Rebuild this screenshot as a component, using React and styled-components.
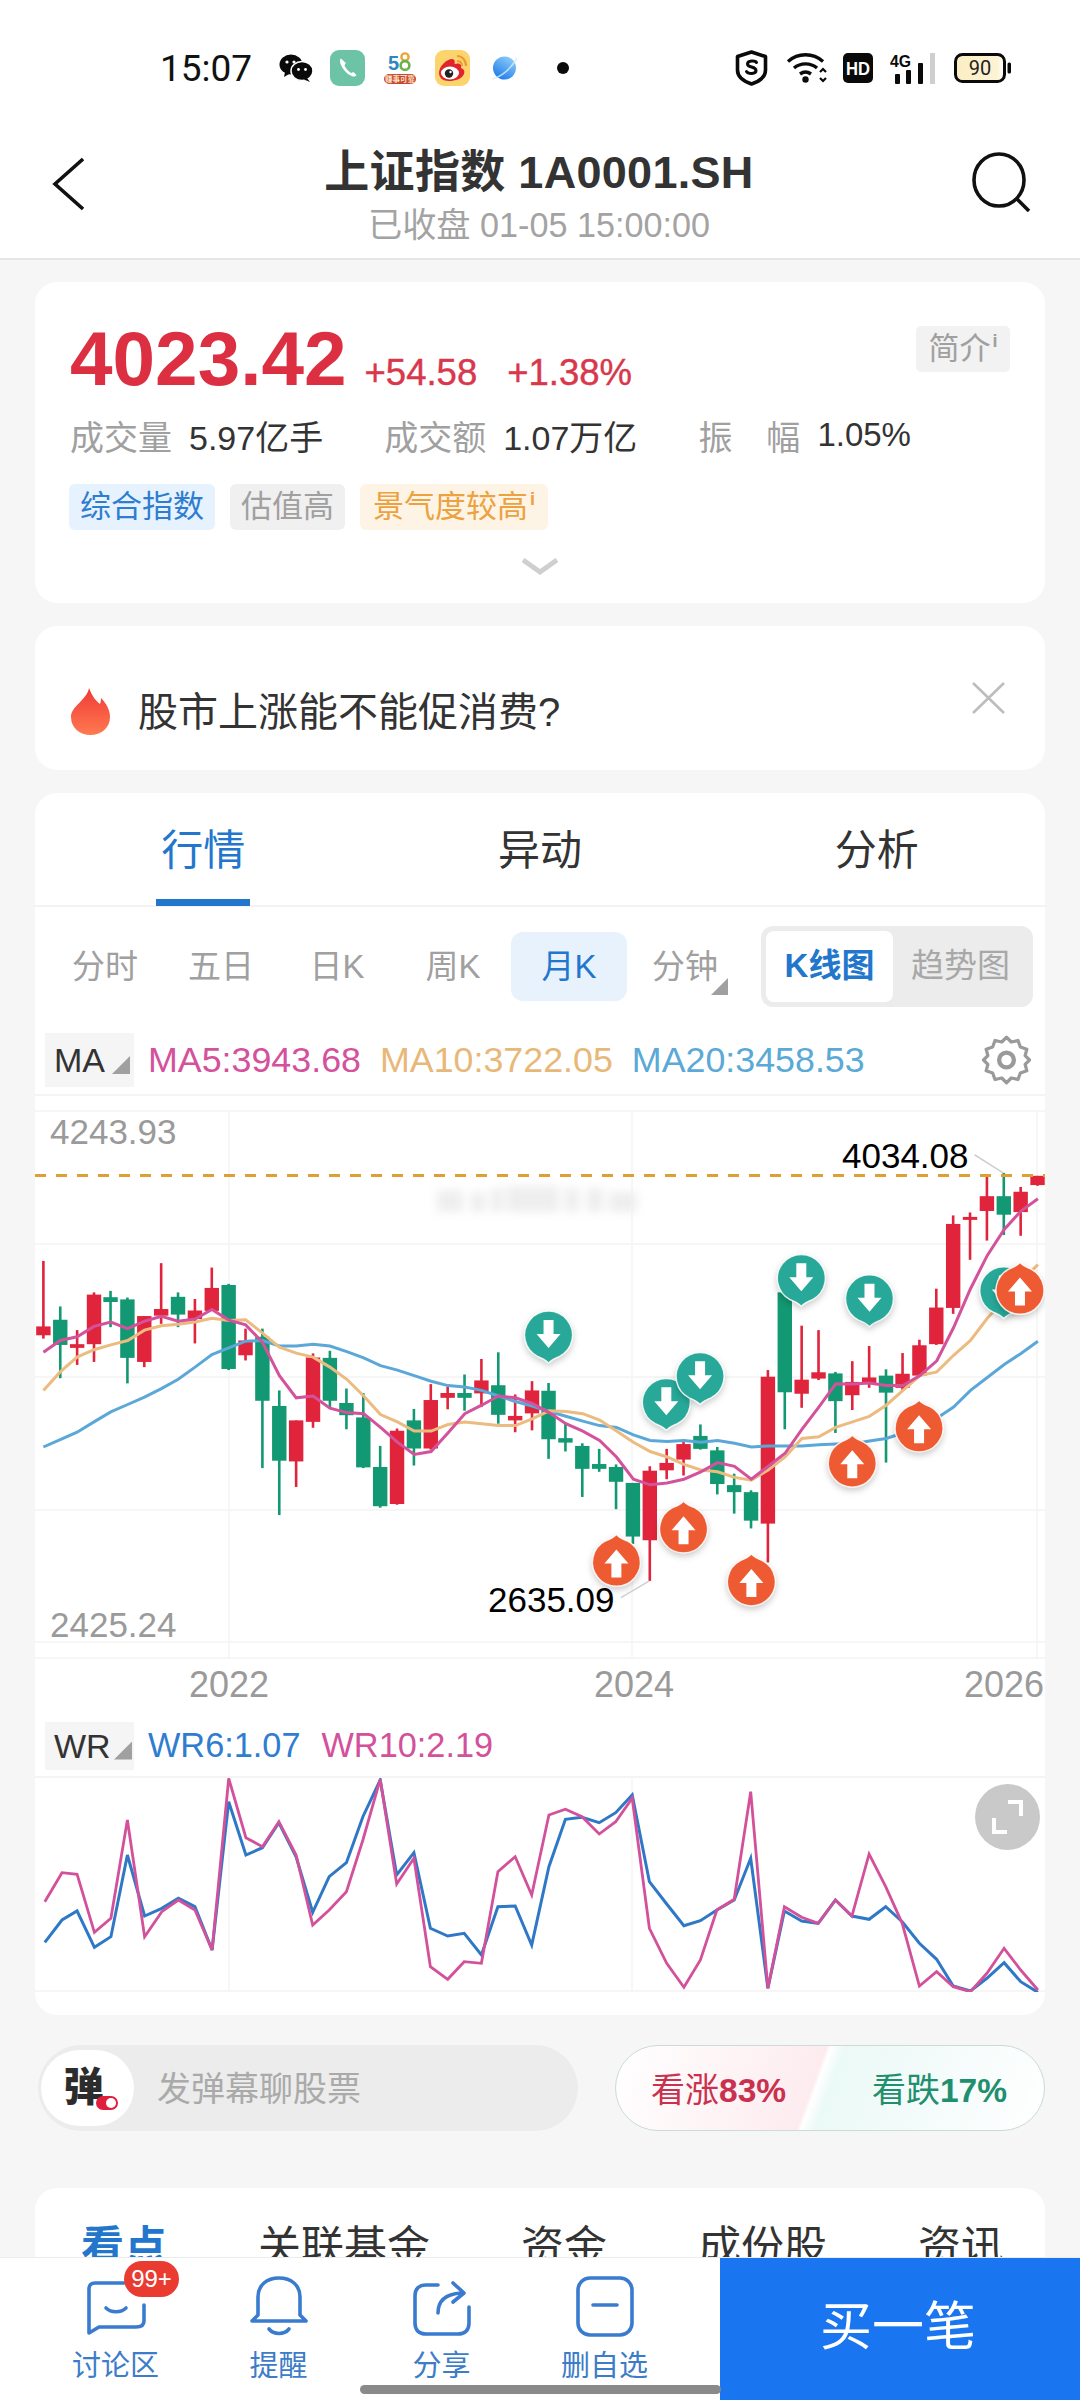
import styled, { createGlobalStyle } from "styled-components";

const GlobalStyle = createGlobalStyle`
  html, body {
    margin: 0;
    padding: 0;
    background: #f6f6f6;
  }
  * {
    box-sizing: border-box;
  }
`;

const Page = styled.div`
  position: relative;
  width: 1080px;
  height: 2400px;
  overflow: hidden;
  background: #f6f6f6;
  font-family: "Liberation Sans", "Noto Sans CJK SC", sans-serif;
  color: #333;
`;

const Top = styled.header`
  background: #fff;
  border-bottom: 2px solid #e6e6e6;
`;

const StatusBar = styled.div`
  display: flex;
  align-items: center;
  height: 136px;
  padding: 0 69px 0 160px;
  color: #111;
`;

const Time = styled.span`
  font-family: Roboto, sans-serif;
  font-size: 37px;
  margin-right: 30px;
  width: 89px;
  white-space: nowrap;
`;

const StatusIcon = styled.svg`
  display: block;
  flex: none;
  margin-left: ${(p) => p.$ml || 0}px;
  overflow: visible;
`;

const StatusSpacer = styled.div`
  flex: 1;
`;

const NavBar = styled.div`
  display: flex;
  align-items: flex-start;
  justify-content: space-between;
  height: 122px;
  padding: 16px 49px 0 52px;
`;

const BackIcon = styled.svg`
  margin-top: 5px;
`;

const NavTitle = styled.div`
  flex: 1;
  text-align: center;
  margin-top: -5px;
  padding-left: 22px;
`;

const Title = styled.div`
  font-size: 45px;
  line-height: 52px;
  font-weight: 700;
  color: #333;
  letter-spacing: 0.3px;
`;

const SubTitle = styled.div`
  font-size: 34.2px;
  line-height: 40px;
  margin-top: 6px;
  color: #a3a3a3;
`;

const Main = styled.main`
  padding: 22px 35px 0;
`;

const Card = styled.section`
  position: relative;
  background: #fff;
  border-radius: 22px;
  margin-bottom: ${(p) => p.$mb || 0}px;
`;

const QuoteCard = styled(Card)`
  height: 321px;
  padding: 39px 35px 0 35px;
`;

const PriceRow = styled.div`
  display: flex;
  align-items: baseline;
`;

const Price = styled.div`
  font-size: 76.5px;
  line-height: 76px;
  font-weight: 700;
  color: #dc2f42;
`;

const Change = styled.div`
  font-size: 36.5px;
  font-weight: 500;
  color: #d8374c;
  margin-left: ${(p) => p.$ml}px;
  -webkit-text-stroke: 0.4px #d8374c;
`;

const IntroChip = styled.div`
  position: absolute;
  top: 44px;
  right: 35px;
  width: 94px;
  height: 46px;
  border-radius: 5px;
  background: #f2f2f2;
  color: #a0a0a0;
  font-size: 31px;
  line-height: 46px;
  text-align: center;
  white-space: nowrap;
`;

const Sup = styled.sup`
  font-size: 18px;
  font-weight: 700;
  line-height: 0;
  vertical-align: 12px;
  margin-left: 2px;
`;

const StatRow = styled.div`
  display: flex;
  align-items: center;
  margin-top: 18px;
  height: 40px;
  font-size: 34px;
  white-space: nowrap;
`;

const StatLabel = styled.span`
  width: 102px;
  color: #a0a0a0;
  text-align-last: justify;
`;

const StatValue = styled.span`
  margin-left: 17px;
  margin-right: 61px;
  color: #333;
  font-size: ${(p) => p.$size || 34}px;
`;

const TagRow = styled.div`
  display: flex;
  margin-top: 29px;
  gap: 15px;
  margin-left: -1px;
`;

const toneColors = {
  blue: ["#e6f2fd", "#2f7dd0"],
  grey: ["#f0f0f0", "#a0a0a0"],
  orange: ["#fef4e6", "#eca23f"],
};

const Tag = styled.span`
  height: 46px;
  padding: 0 ${(p) => (p.$tone === "orange" ? 13 : 11)}px;
  border-radius: 6px;
  background: ${(p) => toneColors[p.$tone][0]};
  color: ${(p) => toneColors[p.$tone][1]};
  font-size: 31px;
  line-height: 45px;
  white-space: nowrap;
`;

const MoreChevron = styled.svg`
  position: absolute;
  left: 487px;
  bottom: 27px;
`;

const TopicCard = styled(Card)`
  display: flex;
  align-items: center;
  height: 144px;
  padding: 27px 40px 0 36px;
`;

const TopicText = styled.div`
  margin-left: 28px;
  font-size: 40px;
  line-height: 48px;
  color: #333;
`;

const TopicClose = styled.svg`
  margin-left: auto;
  margin-top: -27px;
`;

const ChartCard = styled(Card)`
  height: 1222px;
  overflow: hidden;
`;

const MainTabs = styled.div`
  display: grid;
  grid-template-columns: repeat(3, 1fr);
  height: 114px;
  border-bottom: 2px solid #f3f3f3;
`;

const MainTab = styled.div`
  position: relative;
  text-align: center;
  padding-top: 33px;
  font-size: 42px;
  line-height: 50px;
  color: ${(p) => (p.$active ? "#2277cc" : "#333")};

  ${(p) =>
    p.$active &&
    `&::after {
      content: "";
      position: absolute;
      left: 121px;
      bottom: -1px;
      width: 94px;
      height: 7px;
      background: #2277cc;
    }`}
`;

const PeriodRow = styled.div`
  display: flex;
  align-items: flex-start;
  padding: 19px 12px 0 12px;
`;

const Period = styled.div`
  position: relative;
  width: 116px;
  height: 69px;
  margin-top: 6px;
  border-radius: 12px;
  text-align: center;
  font-size: 33px;
  line-height: 69px;
  background: ${(p) => (p.$active ? "#e8f2fd" : "transparent")};
  color: ${(p) => (p.$active ? "#2277cc" : "#a0a0a0")};
`;

const Corner = styled.i`
  position: absolute;
  right: ${(p) => p.$right}px;
  bottom: ${(p) => p.$bottom}px;
  width: ${(p) => p.$size}px;
  height: ${(p) => p.$size}px;
  background: #a0a0a0;
  clip-path: polygon(100% 0, 100% 100%, 0 100%);
`;

const Segment = styled.div`
  display: flex;
  margin-left: auto;
  width: 272px;
  height: 81px;
  padding: 5px;
  border-radius: 12px;
  background: #ececec;
`;

const SegmentItem = styled.div`
  flex: ${(p) => (p.$active ? "0 0 127px" : "1")};
  border-radius: 8px;
  text-align: center;
  font-size: 33px;
  line-height: 70px;
  white-space: nowrap;
  font-weight: ${(p) => (p.$active ? 700 : 400)};
  background: ${(p) => (p.$active ? "#fff" : "transparent")};
  color: ${(p) => (p.$active ? "#2277cc" : "#a8a8a8")};
`;

const IndicatorRow = styled.div`
  display: flex;
  align-items: center;
  height: ${(p) => p.$height}px;
  margin-top: ${(p) => p.$mt || 0}px;
  padding-top: ${(p) => p.$pt || 0}px;
  padding-left: 10px;
  padding-right: 12px;
  border-bottom: 2px solid #f4f4f4;
`;

const IndicatorChip = styled.div`
  position: relative;
  flex: none;
  width: 89px;
  height: ${(p) => p.$height}px;
  padding-left: 9px;
  background: #f5f5f5;
  color: #333;
  font-family: "Liberation Sans", sans-serif;
  font-size: 34px;
  line-height: ${(p) => p.$height}px;
  margin-right: 14px;
`;

const Legend = styled.span`
  font-size: ${(p) => p.$size || 35.8}px;
  margin-right: ${(p) => p.$gap || 19}px;
  white-space: nowrap;
  color: ${(p) => p.$color};
`;

const Gear = styled.svg`
  margin-left: auto;
`;

const ChartSvg = styled.svg`
  display: block;
`;

const AxisText = styled.text`
  font-family: "Liberation Sans", sans-serif;
  font-size: ${(p) => p.$size || 35}px;
  fill: ${(p) => p.$color || "#9a9a9a"};
`;

const Smudge = styled.g`
  filter: blur(5px);
`;

const MarkerGroup = styled.g`
  filter: drop-shadow(0 3px 3px rgba(0, 0, 0, 0.2));
`;

const WrBlock = styled.div`
  position: relative;
  height: 214px;
`;

const ExpandButton = styled.div`
  position: absolute;
  top: 6px;
  right: 5px;
  width: 65px;
  height: 66px;
  border-radius: 50%;
  background: #c9c9c9;
  display: flex;
  align-items: center;
  justify-content: center;
`;

const TalkRow = styled.div`
  display: flex;
  justify-content: space-between;
  align-items: flex-start;
  padding-left: 3px;
  margin-top: 30px;
  margin-bottom: 57px;
`;

const DanmuInput = styled.div`
  display: flex;
  align-items: center;
  width: 540px;
  height: 86px;
  border-radius: 43px;
  background: #ececec;
  padding-left: 3px;
`;

const DanmuBadge = styled.div`
  position: relative;
  width: 93px;
  height: 76px;
  border-radius: 38px;
  background: #fff;
  text-align: center;
  font-size: 40px;
  line-height: 74px;
  font-weight: 900;
  color: #2c2c2c;
  padding-right: 8px;
`;

const DanmuToggle = styled.i`
  position: absolute;
  right: 16px;
  bottom: 16px;
  width: 22px;
  height: 14px;
  border-radius: 7px;
  background: #e01f3d;

  &::after {
    content: "";
    position: absolute;
    right: 2px;
    top: 2px;
    width: 10px;
    height: 10px;
    border-radius: 50%;
    background: #fff;
  }
`;

const DanmuPlaceholder = styled.span`
  margin-left: 23px;
  margin-top: -4px;
  font-size: 34px;
  color: #aaa;
`;

const VotePill = styled.div`
  display: flex;
  align-items: center;
  justify-content: space-between;
  width: 430px;
  height: 86px;
  padding: 0 37px 2px 35px;
  border-radius: 43px;
  border: 1.5px solid #c9dcd5;
  background: linear-gradient(
    110deg,
    #fff 0%,
    #fdecef 46%,
    #fff 47%,
    #ebf9f7 50%,
    #fff 100%
  );
  font-size: 34px;
`;

const VoteText = styled.span`
  color: ${(p) => p.$color};
  white-space: nowrap;
  b {
    font-weight: 700;
    font-size: 33.5px;
  }
`;

const ListCard = styled(Card)`
  height: 300px;
  display: flex;
  gap: 91px;
  padding: 33px 0 0 46px;
`;

const ListTab = styled.div`
  font-size: 43px;
  line-height: 52px;
  font-weight: ${(p) => (p.$active ? 700 : 400)};
  color: ${(p) => (p.$active ? "#2277cc" : "#333")};
  white-space: nowrap;
`;

const BottomBar = styled.nav`
  position: absolute;
  left: 0;
  right: 0;
  bottom: 0;
  height: 143px;
  display: flex;
  background: #fff;
  border-top: 1px solid #ececec;
`;

const BarItems = styled.div`
  display: grid;
  grid-template-columns: repeat(4, 163px);
  padding-left: 34px;
  width: 720px;
`;

const BarItem = styled.div`
  position: relative;
  display: flex;
  flex-direction: column;
  align-items: center;
  padding-top: 17px;
  font-size: 29px;
  line-height: 34px;
  color: #3c7cc8;
`;

const BarIcon = styled.svg`
  display: block;
  margin-bottom: 12px;
`;

const CountBadge = styled.span`
  position: absolute;
  left: 90px;
  top: 3px;
  width: 55px;
  height: 36px;
  border-radius: 18px;
  background: #ea3b30;
  color: #fff;
  font-size: 24px;
  line-height: 36px;
  text-align: center;
`;

const BuyButton = styled.div`
  flex: 1;
  background: #1a75f0;
  color: #fff;
  font-size: 52px;
  line-height: 139px;
  text-align: center;
  padding-right: 4px;
`;

const HomeIndicator = styled.div`
  position: absolute;
  left: 360px;
  bottom: 6px;
  width: 361px;
  height: 9px;
  border-radius: 5px;
  background: #8a8a8a;
`;

// candle coords come from the zoomed crops: [x, wickTop, wickBottom, bodyTop, bodyBottom, colour]
const R = 1568;
const candles = [
  [126, 435, 645, 612, 636, "r"],
  [175, 558, 752, 594, 662, "g"],
  [224, 622, 716, 660, 670, "r"],
  [273, 520, 708, 526, 660, "r"],
  [321, 516, 614, 533, 546, "g"],
  [370, 534, 766, 539, 697, "g"],
  [419, 584, 722, 584, 708, "r"],
  [468, 441, 605, 565, 583, "r"],
  [517, 520, 614, 532, 580, "g"],
  [566, 538, 658, 569, 592, "r"],
  [615, 453, 570, 508, 570, "r"],
  [664, 497, 730, 500, 727, "g"],
  [713, 618, 704, 650, 690, "r"],
  [762, 618, 995, 640, 813, "g"],
  [811, 785, 1122, 827, 975, "g"],
  [860, 866, 1046, 866, 977, "r"],
  [909, 685, 886, 696, 870, "r"],
  [958, 678, 830, 697, 813, "g"],
  [1006, 780, 890, 819, 852, "g"],
  [1055, 792, 995, 858, 993, "g"],
  [1104, 935, 1102, 992, 1098, "g"],
  [1153, 888, 1094, 894, 1092, "r"],
  [1202, 835, 988, 866, 942, "g"],
  [1251, 768, 945, 811, 942, "r"],
  [1300, 775, 836, 792, 805, "r"],
  [1349, 742, 840, 792, 805, "g"],
  [1398, 700, 830, 758, 793, "r"],
  [1447, 682, 875, 771, 851, "g"],
  [1496, 796, 898, 854, 866, "r"],
  [1545, 760, 893, 785, 847, "r"],
  [R + 25, 765, 970, 786, 917, "g"],
  [R + 74, 872, 950, 914, 926, "g"],
  [R + 123, 928, 1073, 935, 997, "g"],
  [R + 172, 943, 1005, 984, 997, "g"],
  [R + 221, 985, 1106, 992, 1032, "g"],
  [R + 270, 1035, 1200, 1035, 1180, "g"],
  [R + 319, 990, 1300, 1002, 1190, "r"],
  [R + 368, 943, 1025, 981, 1001, "r"],
  [R + 417, 918, 1015, 930, 972, "r"],
  [R + 466, 877, 945, 908, 943, "g"],
  [R + 515, 938, 1066, 947, 1038, "g"],
  [R + 564, 1010, 1118, 1041, 1060, "g"],
  [R + 613, 1055, 1158, 1060, 1137, "g"],
  [R + 662, 730, 1250, 748, 1145, "r"],
  [R + 711, 510, 890, 520, 790, "g"],
  [R + 760, 610, 832, 756, 794, "r"],
  [R + 809, 622, 757, 736, 753, "r"],
  [R + 858, 735, 900, 739, 814, "g"],
  [R + 907, 706, 838, 762, 798, "r"],
  [R + 956, 665, 778, 750, 766, "r"],
  [R + 1005, 728, 980, 745, 791, "g"],
  [R + 1053, 684, 785, 740, 778, "r"],
  [R + 1102, 648, 745, 663, 745, "r"],
  [R + 1151, 510, 662, 561, 660, "r"],
  [R + 1200, 312, 578, 335, 562, "r"],
  [R + 1249, 304, 432, 316, 324, "r"],
  [R + 1298, 205, 380, 260, 300, "r"],
  [R + 1347, 197, 365, 260, 310, "g"],
  [R + 1396, 235, 367, 248, 303, "r"],
  [R + 1445, 205, 232, 205, 230, "r"],
];

const step = 48.95;
const series = (values) => values.map((v, i) => [126 + i * step, v]);

const ma5 = series([
  682, 650, 640, 612, 600, 618, 598, 585, 598, 592, 566, 595, 608, 655, 745,
  805, 800, 833, 845, 848, 885, 925, 958, 950, 900, 848, 825, 800, 805, 820,
  845, 875, 895, 920, 965, 1025, 1040, 1035, 1025, 1005, 980, 990, 1025, 990,
  955, 890, 830, 768, 768, 765, 772, 772, 745, 705, 615, 510, 420, 350, 300,
  267,
]);
const ma10 = series([
  785, 735, 695, 675, 662, 650, 622, 610, 606, 600, 590, 596, 594, 630, 668,
  684, 695, 722, 755, 800, 850, 870, 895, 895, 877, 870, 875, 880, 880, 862,
  840, 842, 848, 865, 895, 925, 950, 965, 985, 1000, 1005, 1020, 1028, 1000,
  965, 915, 910, 885, 870, 855, 825, 785, 745, 735, 690, 650, 590, 540, 490,
  445,
]);
const ma20 = series([
  938, 918, 898, 870, 843, 823, 803, 780, 755, 722, 688, 670, 652, 650, 665,
  665, 660, 665, 680, 697, 718, 730, 745, 760, 772, 776, 785, 800, 815, 827,
  842, 855, 868, 880, 885, 905, 920, 923, 920, 925, 920, 928, 938, 935, 935,
  935, 932, 930, 930, 922, 915, 900, 880, 860, 830, 785, 750, 715, 685, 652,
]);

const markers = [
  [R + 1347, 515, "down"],
  [R + 759, 482, "down"],
  [R + 957, 537, "down"],
  [R + 25, 635, "down"],
  [R + 367, 817, "down"],
  [R + 465, 747, "down"],
  [R + 222, 1250, "up"],
  [R + 417, 1160, "up"],
  [R + 614, 1303, "up"],
  [R + 907, 982, "up"],
  [R + 1101, 887, "up"],
  [R + 1394, 515, "up"],
];

const wrX = [
  65, 90, 112, 137, 161, 185, 210, 235, 259, 283, 308, 332, 357, 381, 405, 430,
  454, 478, 503, 527, 552, 576, 601, 625, 650, 674, 699, 723, 748, 772, 797,
  821, 845, 870, 894, 918, 943, 968, 993, 1017, 1041, 1066, 1090, 1115, 1139,
  1164, 1188, 1213, 1237, 1262, 1286, 1310, 1335, 1360, 1384, 1409, 1433, 1458,
  1482, 1507,
];
const wr6 = [
  787, 720, 693, 802, 770, 525, 708, 685, 655, 680, 810, 365, 525, 503, 428,
  530, 697, 590, 548, 410, 300, 585, 518, 745, 768, 760, 825, 680, 678, 795,
  560, 418, 412, 428, 398, 345, 605, 672, 737, 722, 690, 660, 535, 925, 693,
  723, 730, 660, 708, 718, 680, 725, 790, 838, 918, 933, 895, 848, 905, 937,
];
const wr10 = [
  665, 578, 583, 757, 715, 420, 770, 695, 660, 690, 810, 295, 473, 500, 425,
  525, 735, 690, 635, 480, 298, 612, 535, 860, 898, 845, 850, 575, 530, 645,
  405, 388, 410, 462, 425, 355, 745, 850, 922, 840, 690, 658, 335, 925, 680,
  712, 730, 660, 708, 522, 620, 730, 918, 875, 920, 935, 880, 805, 870, 930,
];

// chart svg starts at x=35, y=1096 on the page
const cx = (u) => u / 2.904 - 35;
const cy = (v) => 4 + v / 2.703;
const toPoints = (pts) =>
  pts.map(([u, v]) => `${cx(u).toFixed(1)},${cy(v).toFixed(1)}`).join(" ");

const RED = "#e0243c";
const GREEN = "#129872";

function Marker({ u, v, dir }) {
  const isUp = dir === "up";
  const x = cx(u);
  const y = cy(v);
  return (
    <MarkerGroup>
      <g transform={`translate(${x} ${y}) rotate(${isUp ? 180 : 0})`}>
        <path
          d="M-11 21.5 A24 24 0 1 1 11 21.5 Q4 24 0 28 Q-4 24 -11 21.5 Z"
          fill={isUp ? "#ee5a32" : "#27a898"}
          stroke="#fff"
          strokeOpacity="0.85"
          strokeWidth="1.5"
        />
        <path d="M-5 -15 H5 V-1 H12 L0 13 L-12 -1 H-5 Z" fill="#fff" />
      </g>
    </MarkerGroup>
  );
}

function KlineChart() {
  return (
    <ChartSvg width="1010" height="616" viewBox="0 0 1010 616">
      {[15, 148, 281, 414, 546, 562].map((y) => (
        <line key={y} x1="0" x2="1010" y1={y} y2={y} stroke="#f3f3f3" strokeWidth="1.5" />
      ))}
      {[194, 597, 1002].map((x) => (
        <line key={x} x1={x} x2={x} y1="15" y2="562" stroke="#f4f4f4" strokeWidth="1.5" />
      ))}
      <Smudge fill="#eeeeee">
        <rect x="402" y="94" width="26" height="22" />
        <rect x="436" y="96" width="14" height="20" />
        <rect x="456" y="92" width="12" height="24" />
        <rect x="472" y="90" width="52" height="26" />
        <rect x="530" y="92" width="14" height="24" />
        <rect x="552" y="92" width="16" height="24" />
        <rect x="574" y="96" width="28" height="20" />
      </Smudge>
      <AxisText x="15" y="48">4243.93</AxisText>
      <AxisText x="15" y="541">2425.24</AxisText>
      {candles.map(([u, wt, wb, bt, bb, c]) => {
        const fill = c === "r" ? RED : GREEN;
        const x = cx(u);
        return (
          <g key={u} fill={fill}>
            <rect x={x - 1.3} y={cy(wt)} width="2.6" height={cy(wb) - cy(wt)} />
            <rect x={x - 7.2} y={cy(bt)} width="14.4" height={cy(bb) - cy(bt)} />
          </g>
        );
      })}
      <polyline points={toPoints(ma20)} fill="none" stroke="#5ba8d8" strokeWidth="3" />
      <polyline points={toPoints(ma10)} fill="none" stroke="#ecbb80" strokeWidth="3" />
      <polyline points={toPoints(ma5)} fill="none" stroke="#d4519c" strokeWidth="3" />
      <line x1="0" x2="1010" y1="79.5" y2="79.5" stroke="#dda032" strokeWidth="3" strokeDasharray="11 10" />
      {markers.map(([u, v, dir]) => (
        <Marker key={`${u}-${v}`} u={u} v={v} dir={dir} />
      ))}
      <line x1={cx(R + 1262)} y1={cy(148)} x2={cx(R + 1345)} y2={cy(197)} stroke="#cfcfcf" strokeWidth="1.5" />
      <line x1={cx(R + 235)} y1={cy(1345)} x2={cx(R + 318)} y2={cy(1300)} stroke="#cfcfcf" strokeWidth="1.5" />
      <AxisText x="807" y="72" $color="#000">4034.08</AxisText>
      <AxisText x="453" y="516" $color="#000">2635.09</AxisText>
      <AxisText x="154" y="601" $size="36">2022</AxisText>
      <AxisText x="559" y="601" $size="36">2024</AxisText>
      <AxisText x="929" y="601" $size="36">2026</AxisText>
    </ChartSvg>
  );
}

const wrPoints = (values) =>
  values.map((v, i) => `${(wrX[i] / 1.452 - 35).toFixed(1)},${(v / 3 - 98).toFixed(1)}`).join(" ");

function WrChart() {
  return (
    <WrBlock>
      <ChartSvg width="1010" height="214" viewBox="0 0 1010 214">
        {[194, 597].map((x) => (
          <line key={x} x1={x} x2={x} y1="0" y2="214" stroke="#f4f4f4" strokeWidth="1.5" />
        ))}
        <line x1="0" x2="1010" y1="213" y2="213" stroke="#f3f3f3" strokeWidth="1.5" />
        <polyline points={wrPoints(wr6)} fill="none" stroke="#2f78c6" strokeWidth="3" />
        <polyline points={wrPoints(wr10)} fill="none" stroke="#d3519a" strokeWidth="2.8" />
      </ChartSvg>
      <ExpandButton>
        <svg width="34" height="36" viewBox="0 0 34 36" fill="none" stroke="#fff" strokeWidth="4">
          <path d="M17 3 H30 V17" />
          <path d="M3 19 V33 H16" />
        </svg>
      </ExpandButton>
    </WrBlock>
  );
}

function WeChatIcon() {
  return (
    <StatusIcon width="34" height="28" viewBox="0 0 34 28">
      <ellipse cx="12" cy="10.5" rx="11.5" ry="10" fill="#0a0a0a" />
      <path d="M6 18 L5 23 L11 19.5 Z" fill="#0a0a0a" />
      <ellipse cx="23" cy="17" rx="11" ry="9.5" fill="#0a0a0a" stroke="#fff" strokeWidth="1.5" />
      <path d="M28 24 L31 28 L25 25.5 Z" fill="#0a0a0a" />
      <circle cx="8" cy="8" r="1.6" fill="#fff" />
      <circle cx="15" cy="8" r="1.6" fill="#fff" />
      <circle cx="19.5" cy="15.5" r="1.4" fill="#fff" />
      <circle cx="26.5" cy="15.5" r="1.4" fill="#fff" />
    </StatusIcon>
  );
}

function PhoneIcon() {
  return (
    <StatusIcon $ml={17} width="35" height="36" viewBox="0 0 35 36">
      <rect width="35" height="36" rx="9" fill="#6cc3a6" />
      <path
        d="M11 8.5 C9.5 9.5 9.5 12 11 15 C13 19.5 17 24 22 26.2 C24 27 25.5 26.5 26.5 25 L23.5 22 L21 23 C18.5 21.5 15.5 18 14.5 15.5 L15.8 13 Z"
        fill="#fff"
      />
    </StatusIcon>
  );
}

function FiftyEightIcon() {
  return (
    <StatusIcon $ml={18} width="34" height="34" viewBox="0 0 34 34">
      <text x="5" y="19" fontFamily="Liberation Sans, sans-serif" fontSize="20" fontWeight="700" fill="#2e86c1">5</text>
      <circle cx="22" cy="6" r="3.6" fill="none" stroke="#e7a83b" strokeWidth="2.4" />
      <circle cx="22" cy="14.5" r="4.4" fill="none" stroke="#6eb04a" strokeWidth="2.6" />
      <rect x="1" y="23" width="32" height="10" rx="5" fill="#c8452f" />
      <text x="17" y="31" textAnchor="middle" fontFamily="Noto Sans CJK SC, sans-serif" fontSize="7.5" fontWeight="700" fill="#f8e6c8">
        赚事可靠
      </text>
    </StatusIcon>
  );
}

function WeiboIcon() {
  return (
    <StatusIcon $ml={18} width="35" height="36" viewBox="0 0 35 36">
      <rect width="35" height="36" rx="9" fill="#fbd46e" />
      <path d="M22 6 C27 6 31 10 31 16" fill="none" stroke="#ee9a34" strokeWidth="2.2" />
      <path d="M22 11 C25 11 27 13 27 16" fill="none" stroke="#ee9a34" strokeWidth="2" />
      <path
        d="M4 23 C4 16 12 9 17 9 C20 9 20 12 19.5 14 C24 12.5 27 14 26 18 C29 19 30 21 29 24 C27 29 20 31 14 31 C8 31 4 28 4 23 Z"
        fill="#e1232d"
      />
      <ellipse cx="15" cy="23" rx="9" ry="6.5" fill="#fff" />
      <circle cx="14" cy="23.5" r="4.2" fill="#222" />
      <circle cx="15.5" cy="22" r="1.2" fill="#fff" />
    </StatusIcon>
  );
}

function PlanetIcon() {
  return (
    <StatusIcon $ml={21} width="27" height="26" viewBox="0 0 27 26">
      <defs>
        <linearGradient id="planetFill" x1="0.8" y1="0" x2="0.2" y2="1">
          <stop offset="0" stopColor="#8fd0fa" />
          <stop offset="1" stopColor="#1c78e8" />
        </linearGradient>
      </defs>
      <circle cx="13.5" cy="13" r="11.5" fill="url(#planetFill)" />
      <path d="M1 24 C10 22 20 14 26 3" fill="none" stroke="#d6ecfc" strokeWidth="1.6" opacity="0.8" />
    </StatusIcon>
  );
}

function ShieldIcon() {
  return (
    <StatusIcon width="33" height="36" viewBox="0 0 33 36">
      <path
        d="M16.5 2 L30.5 6.5 V20 C30.5 27 24 31.5 16.5 34 C9 31.5 2.5 27 2.5 20 V6.5 Z"
        fill="#fff"
        stroke="#0a0a0a"
        strokeWidth="3.6"
        strokeLinejoin="round"
      />
      <path
        d="M21.5 12.5 C20.5 10.5 12.5 10 12.5 14 C12.5 18 21 16 21 20.5 C21 24.5 13 24 11.5 21.5"
        fill="none"
        stroke="#0a0a0a"
        strokeWidth="3"
        strokeLinecap="round"
      />
    </StatusIcon>
  );
}

function WifiIcon() {
  return (
    <StatusIcon $ml={19} width="42" height="30" viewBox="0 0 42 30">
      <g fill="none" stroke="#0a0a0a" strokeWidth="3.4">
        <path d="M1 8.5 C11 -0.5 26 -0.5 36 8.5" />
        <path d="M7 15 C13.5 9.5 23.5 9.5 30 15" />
        <path d="M13 21 C16.5 18.5 20.5 18.5 24 21" />
      </g>
      <circle cx="18.5" cy="26.5" r="3.2" fill="#0a0a0a" />
      <path d="M33 19 L36 16 L39 19 M33 25 L36 28 L39 25" fill="none" stroke="#0a0a0a" strokeWidth="2.2" />
    </StatusIcon>
  );
}

function HdIcon() {
  return (
    <StatusIcon $ml={14} width="30" height="30" viewBox="0 0 30 30">
      <rect width="30" height="30" rx="5" fill="#0a0a0a" />
      <text x="15" y="21.5" textAnchor="middle" fontFamily="Liberation Sans, sans-serif" fontSize="18" fontWeight="700" fill="#fff" textLength="24" lengthAdjust="spacingAndGlyphs">
        HD
      </text>
    </StatusIcon>
  );
}

function SignalIcon() {
  return (
    <StatusIcon $ml={17} width="45" height="31" viewBox="0 0 45 31">
      <text x="0" y="14" fontFamily="Liberation Sans, sans-serif" fontSize="16" fontWeight="700" fill="#0a0a0a" textLength="21" lengthAdjust="spacingAndGlyphs">
        4G
      </text>
      <rect x="5" y="21" width="5" height="10" rx="1" fill="#0a0a0a" />
      <rect x="16" y="17" width="5" height="14" rx="1" fill="#0a0a0a" />
      <rect x="28" y="10" width="5" height="21" rx="1" fill="#0a0a0a" />
      <rect x="40" y="0" width="5" height="31" fill="#cfcfcf" />
    </StatusIcon>
  );
}

function BatteryIcon() {
  return (
    <StatusIcon $ml={19} width="57" height="30" viewBox="0 0 57 30">
      <defs>
        <linearGradient id="batteryFill" x1="0" y1="0" x2="1" y2="0">
          <stop offset="0" stopColor="#fbeec4" />
          <stop offset="0.85" stopColor="#fdf3d4" />
          <stop offset="1" stopColor="#fff" />
        </linearGradient>
      </defs>
      <rect x="1.5" y="1.5" width="49" height="27" rx="7" fill="url(#batteryFill)" stroke="#0a0a0a" strokeWidth="3" />
      <rect x="53.5" y="9.5" width="3.5" height="11" rx="1.5" fill="#0a0a0a" />
      <text x="26" y="22" textAnchor="middle" fontFamily="Roboto, sans-serif" fontSize="20" fill="#222">90</text>
    </StatusIcon>
  );
}

const periods = ["分时", "五日", "日K", "周K", "月K", "分钟"];
const listTabs = ["看点", "关联基金", "资金", "成份股", "资讯"];

export default function App() {
  return (
    <Page>
      <GlobalStyle />
      <Top>
        <StatusBar>
          <Time>15:07</Time>
          <WeChatIcon />
          <PhoneIcon />
          <FiftyEightIcon />
          <WeiboIcon />
          <PlanetIcon />
          <StatusIcon $ml={38} width="14" height="14" viewBox="0 0 14 14">
            <circle cx="7" cy="7" r="6" fill="#0a0a0a" />
          </StatusIcon>
          <StatusSpacer />
          <ShieldIcon />
          <WifiIcon />
          <HdIcon />
          <SignalIcon />
          <BatteryIcon />
        </StatusBar>
        <NavBar>
          <BackIcon width="32" height="54" viewBox="0 0 32 54" fill="none" stroke="#111" strokeWidth="3.6">
            <path d="M31 2 L3 27 L31 52" />
          </BackIcon>
          <NavTitle>
            <Title>上证指数 1A0001.SH</Title>
            <SubTitle>已收盘 01-05 15:00:00</SubTitle>
          </NavTitle>
          <svg width="59" height="60" viewBox="0 0 59 60" fill="none" stroke="#111" strokeWidth="3.6">
            <ellipse cx="27" cy="28" rx="25" ry="26" />
            <path d="M45 47 L57 59" />
          </svg>
        </NavBar>
      </Top>
      <Main>
        <QuoteCard $mb={23}>
          <PriceRow>
            <Price>4023.42</Price>
            <Change $ml={18}>+54.58</Change>
            <Change $ml={30}>+1.38%</Change>
          </PriceRow>
          <IntroChip>
            简介<Sup>i</Sup>
          </IntroChip>
          <StatRow>
            <StatLabel>成交量</StatLabel>
            <StatValue>5.97亿手</StatValue>
            <StatLabel>成交额</StatLabel>
            <StatValue>1.07万亿</StatValue>
            <StatLabel>振幅</StatLabel>
            <StatValue $size={33}>1.05%</StatValue>
          </StatRow>
          <TagRow>
            <Tag $tone="blue">综合指数</Tag>
            <Tag $tone="grey">估值高</Tag>
            <Tag $tone="orange">
              景气度较高<Sup>i</Sup>
            </Tag>
          </TagRow>
          <MoreChevron width="36" height="18" viewBox="0 0 36 18" fill="none" stroke="#cfcfcf" strokeWidth="5">
            <path d="M1 2 L18 14 L35 2" />
          </MoreChevron>
        </QuoteCard>

        <TopicCard $mb={23}>
          <svg width="39" height="47" viewBox="0 0 39 47">
            <defs>
              <linearGradient id="flameFill" x1="0.5" y1="0" x2="0.5" y2="1">
                <stop offset="0" stopColor="#f03a36" />
                <stop offset="1" stopColor="#ff7a50" />
              </linearGradient>
            </defs>
            <path
              d="M18 0 C21 8 25 13 29 16 C30 13 30 11 30 10 C36 16 39 23 39 29 C39 40 30 47 19.5 47 C9 47 0 40 0 29 C0 18 16 12 18 0 Z"
              fill="url(#flameFill)"
            />
          </svg>
          <TopicText>股市上涨能不能促消费?</TopicText>
          <TopicClose width="33" height="32" viewBox="0 0 33 32" stroke="#bdbdbd" strokeWidth="2.6">
            <path d="M1 1 L32 31 M32 1 L1 31" />
          </TopicClose>
        </TopicCard>

        <ChartCard>
          <MainTabs>
            <MainTab $active>行情</MainTab>
            <MainTab>异动</MainTab>
            <MainTab>分析</MainTab>
          </MainTabs>
          <PeriodRow>
            {periods.map((name) => (
              <Period key={name} $active={name === "月K"}>
                {name}
                {name === "分钟" && <Corner $right={15} $bottom={6} $size={17} />}
              </Period>
            ))}
            <Segment>
              <SegmentItem $active>K线图</SegmentItem>
              <SegmentItem>趋势图</SegmentItem>
            </Segment>
          </PeriodRow>
          <IndicatorRow $height={70} $mt={19}>
            <IndicatorChip $height={54}>
              MA
              <Corner $right={4} $bottom={13} $size={18} />
            </IndicatorChip>
            <Legend $color="#d4519c">MA5:3943.68</Legend>
            <Legend $color="#e8b878">MA10:3722.05</Legend>
            <Legend $color="#5aa9d6">MA20:3458.53</Legend>
            <Gear width="53" height="52" viewBox="0 0 24 24" fill="none" stroke="#9a9a9a" strokeWidth="1.5" strokeLinejoin="round">
              <path d="M12 1.5 L14.2 3.7 L17.3 3 L18.4 6 L21.4 7 L20.6 10 L22.6 12 L20.6 14 L21.4 17 L18.4 18 L17.3 21 L14.2 20.3 L12 22.5 L9.8 20.3 L6.7 21 L5.6 18 L2.6 17 L3.4 14 L1.4 12 L3.4 10 L2.6 7 L5.6 6 L6.7 3 L9.8 3.7 Z" />
              <circle cx="12" cy="12" r="3.4" strokeWidth="2" />
            </Gear>
          </IndicatorRow>
          <KlineChart />
          <IndicatorRow $height={66} $pt={3}>
            <IndicatorChip $height={48}>
              WR
              <Corner $right={2} $bottom={10} $size={18} />
            </IndicatorChip>
            <Legend $color="#2f7dd0" $size={34.3} $gap={21}>WR6:1.07</Legend>
            <Legend $color="#d3519a" $size={34.3}>WR10:2.19</Legend>
          </IndicatorRow>
          <WrChart />
        </ChartCard>

        <TalkRow>
          <DanmuInput>
            <DanmuBadge>
              弹
              <DanmuToggle />
            </DanmuBadge>
            <DanmuPlaceholder>发弹幕聊股票</DanmuPlaceholder>
          </DanmuInput>
          <VotePill>
            <VoteText $color="#c9314f">
              看涨<b>83%</b>
            </VoteText>
            <VoteText $color="#1f8f6e">
              看跌<b>17%</b>
            </VoteText>
          </VotePill>
        </TalkRow>

        <ListCard>
          {listTabs.map((name) => (
            <ListTab key={name} $active={name === "看点"}>
              {name}
            </ListTab>
          ))}
        </ListCard>
      </Main>

      <BottomBar>
        <BarItems>
          <BarItem>
            <BarIcon width="60" height="62" viewBox="0 0 60 62" fill="none" stroke="#3a7bd0" strokeWidth="3.6" strokeLinecap="round" strokeLinejoin="round">
              <path d="M38 8 H9 C5 8 3 10 3 14 V58 L13 52 H50 C55 52 58 50 58 46 V30" />
              <path d="M20 33 C25 38 35 38 40 33" />
            </BarIcon>
            <CountBadge>99+</CountBadge>
            讨论区
          </BarItem>
          <BarItem>
            <BarIcon width="60" height="62" viewBox="0 0 60 62" fill="none" stroke="#3a7bd0" strokeWidth="3.6" strokeLinecap="round" strokeLinejoin="round">
              <path d="M9 40 V22 C9 10 18 3 30 3 C42 3 51 10 51 22 V40 L57 46 H3 Z" />
              <path d="M20 54 C25 60 35 60 40 54" />
            </BarIcon>
            提醒
          </BarItem>
          <BarItem>
            <BarIcon width="60" height="62" viewBox="0 0 60 62" fill="none" stroke="#3a7bd0" strokeWidth="3.6" strokeLinecap="round" strokeLinejoin="round">
              <path d="M26 10 H14 C7 10 3 14 3 21 V48 C3 55 7 59 14 59 H46 C53 59 57 55 57 48 V32" />
              <path d="M26 38 C26 26 34 19 49 18" />
              <path d="M41 8 L52 18 L41 27" />
            </BarIcon>
            分享
          </BarItem>
          <BarItem>
            <BarIcon width="60" height="62" viewBox="0 0 60 62" fill="none" stroke="#3a7bd0" strokeWidth="3.6" strokeLinecap="round">
              <rect x="3" y="3" width="54" height="57" rx="12" />
              <path d="M18 30 H42" />
            </BarIcon>
            删自选
          </BarItem>
        </BarItems>
        <BuyButton>买一笔</BuyButton>
        <HomeIndicator />
      </BottomBar>
    </Page>
  );
}
